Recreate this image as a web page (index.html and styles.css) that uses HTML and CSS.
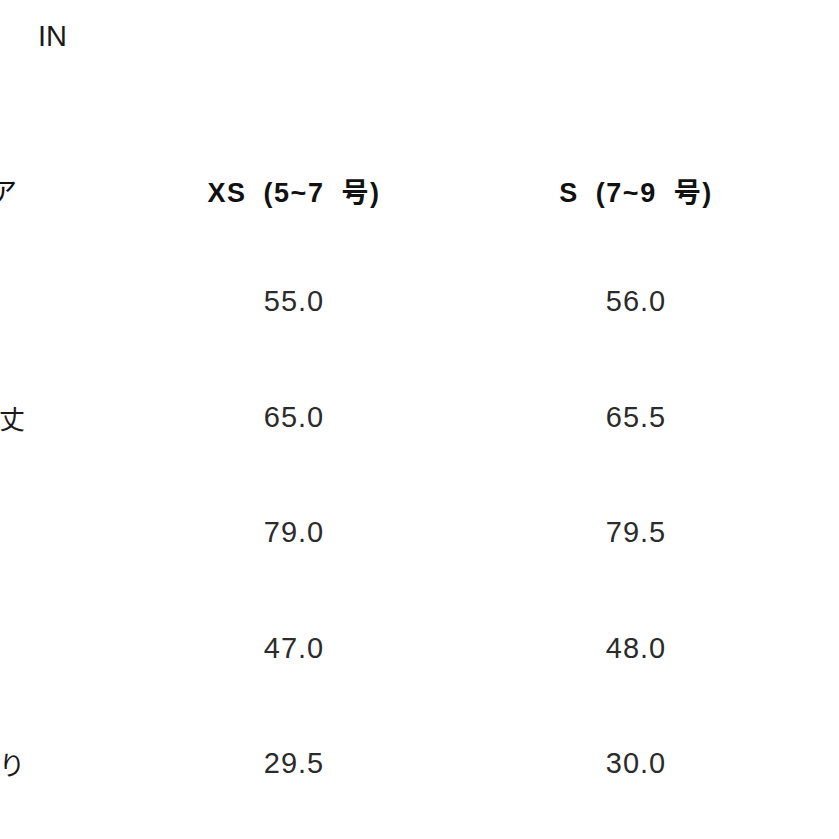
FILE: index.html
```html
<!DOCTYPE html>
<html lang="ja">
<head>
<meta charset="utf-8">
<link rel="stylesheet" href="styles.css">
</head>
<body>
<div class="page">
  <div class="unit">IN</div>
  <div class="size-table">
    <div class="cell label head">ア</div>
    <div class="cell head">XS (5~7 号)</div>
    <div class="cell head">S (7~9 号)</div>

    <div class="cell label"></div>
    <div class="cell num">55.0</div>
    <div class="cell num">56.0</div>

    <div class="cell label">丈</div>
    <div class="cell num">65.0</div>
    <div class="cell num">65.5</div>

    <div class="cell label"></div>
    <div class="cell num">79.0</div>
    <div class="cell num">79.5</div>

    <div class="cell label"></div>
    <div class="cell num">47.0</div>
    <div class="cell num">48.0</div>

    <div class="cell label">り</div>
    <div class="cell num">29.5</div>
    <div class="cell num">30.0</div>
  </div>
</div>
</body>
</html>
```

FILE: styles.css
```css
html, body {
  margin: 0;
  padding: 0;
  background: #ffffff;
}

body {
  font-family: "Liberation Sans", "Noto Sans CJK JP", sans-serif;
  color: #222222;
  overflow: hidden;
}

.page {
  width: 839px;
  height: 839px;
  overflow: hidden;
}

.unit {
  height: 72px;
  padding-left: 38px;
  font-size: 29px;
  line-height: 72px;
  color: #1a1a1a;
}

.size-table {
  display: grid;
  grid-template-columns: 123px 342px 342px;
  grid-template-rows: 108px repeat(5, 115.5px);
  margin-top: 64px;
}

.cell {
  display: flex;
  align-items: center;
  justify-content: center;
  white-space: nowrap;
}

.label {
  justify-content: flex-end;
  padding-right: 98px;
  font-family: "Noto Sans CJK JP", sans-serif;
  font-size: 26px;
  color: #1a1a1a;
  overflow: hidden;
}

.head {
  font-weight: 700;
  font-size: 27px;
  letter-spacing: 1.5px;
  word-spacing: 8px;
  color: #111111;
}

.label.head {
  font-weight: 400;
  letter-spacing: 0;
  word-spacing: 0;
  padding-right: 106px;
}

.num {
  font-size: 29px;
  letter-spacing: 1px;
  color: #2b2b2b;
}
```
